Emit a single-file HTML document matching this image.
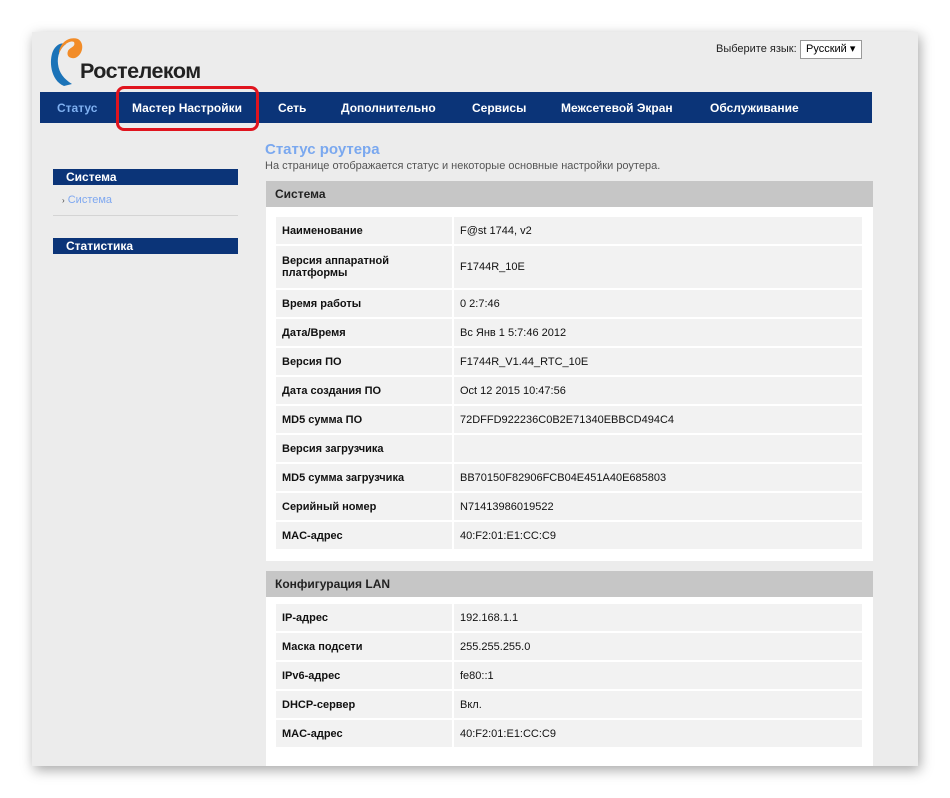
<!DOCTYPE html>
<html><head><meta charset="utf-8"><style>
body{margin:0;width:950px;height:798px;background:#fff;font-family:"Liberation Sans",sans-serif;position:relative;overflow:hidden}
.page{position:absolute;left:32px;top:32px;width:886px;height:734px;background:#ececec;box-shadow:2px 4px 12px rgba(0,0,0,.35)}
.a{position:absolute}
.nav{left:40px;top:92px;width:832px;height:31px;background:#0b3478}
.nav span{position:absolute;top:9px;color:#fff;font-weight:bold;font-size:12px}
.side{background:#0b3478;color:#fff;font-weight:bold;font-size:12px;padding-left:13px;height:16px;line-height:16px;width:172px;left:53px}
.panel{background:#fff;left:266px;width:607px}
.hdr{background:#c6c6c6;left:266px;width:607px;height:26px;line-height:26px;font-weight:bold;font-size:12px;padding-left:9px;box-sizing:border-box;color:#222}
table{position:absolute;left:274px;width:590px;border-collapse:collapse;font-size:11px;color:#111}
td{background:#f2f2f2;border:2px solid #fff;padding:0 6px;height:27px}
td:first-child{font-weight:bold;width:164px}
</style></head><body>
<div class="page"></div>
<svg class="a" style="left:48px;top:36px" width="40" height="52" viewBox="0 0 40 52">
<path d="M16 50 C2 44 1 24 5 15 C8 9 13 6 18 8 C12 12 9 20 10 28 C11 37 16 43 24 48 Z" fill="#1b73b8"/>
<path d="M11 18 C11 7 21 0 30 3 C37 7 35 19 27 22 C22 23 18 20 20 15 C22 11 28 11 26 6 C22 4 14 9 11 18 Z" fill="#f28c28"/>
</svg>
<div class="a" style="left:80px;top:59px;font-size:21.5px;font-weight:bold;color:#222;letter-spacing:-0.5px">Ростелеком</div>
<div class="a" style="left:716px;top:43px;font-size:11px;color:#222">Выберите язык:</div>
<div class="a" style="left:800px;top:40px;height:17px;border:1px solid #999;background:#fff;font-size:11px;line-height:17px;padding-left:5px;width:55px">Русский ▾</div>
<div class="a nav">
<span style="left:17px;color:#7fb0f0">Статус</span>
<span style="left:92px">Мастер Настройки</span>
<span style="left:238px">Сеть</span>
<span style="left:301px">Дополнительно</span>
<span style="left:432px">Сервисы</span>
<span style="left:521px">Межсетевой Экран</span>
<span style="left:670px">Обслуживание</span>
</div>
<div class="a" style="left:116px;top:86px;width:137px;height:39px;border:3px solid #e0141e;border-radius:8px"></div>
<div class="a side" style="top:169px">Система</div>
<div class="a" style="left:62px;top:194px;font-size:11px;color:#7fa8f0"><span style="color:#444;font-size:8px">›</span> Система</div>
<div class="a" style="left:53px;top:215px;width:185px;height:1px;background:#d4d4d4"></div>
<div class="a side" style="top:238px">Статистика</div>
<div class="a" style="left:265px;top:141px;font-size:15px;font-weight:bold;color:#7aa8ef">Статус роутера</div>
<div class="a" style="left:265px;top:160px;font-size:11px;color:#555">На странице отображается статус и некоторые основные настройки роутера.</div>
<div class="a hdr" style="top:181px">Система</div>
<div class="a panel" style="top:207px;height:354px"></div>
<table style="top:215px">
<tr><td>Наименование</td><td>F@st 1744, v2</td></tr>
<tr><td style="height:42px">Версия аппаратной платформы</td><td>F1744R_10E</td></tr>
<tr><td>Время работы</td><td>0 2:7:46</td></tr>
<tr><td>Дата/Время</td><td>Вс Янв 1 5:7:46 2012</td></tr>
<tr><td>Версия ПО</td><td>F1744R_V1.44_RTC_10E</td></tr>
<tr><td>Дата создания ПО</td><td>Oct 12 2015 10:47:56</td></tr>
<tr><td>MD5 сумма ПО</td><td>72DFFD922236C0B2E71340EBBCD494C4</td></tr>
<tr><td>Версия загрузчика</td><td></td></tr>
<tr><td>MD5 сумма загрузчика</td><td>BB70150F82906FCB04E451A40E685803</td></tr>
<tr><td>Серийный номер</td><td>N71413986019522</td></tr>
<tr><td>MAC-адрес</td><td>40:F2:01:E1:CC:C9</td></tr>
</table>
<div class="a hdr" style="top:571px">Конфигурация LAN</div>
<div class="a panel" style="top:597px;height:169px"></div>
<table style="top:602px">
<tr><td>IP-адрес</td><td>192.168.1.1</td></tr>
<tr><td>Маска подсети</td><td>255.255.255.0</td></tr>
<tr><td>IPv6-адрес</td><td>fe80::1</td></tr>
<tr><td>DHCP-сервер</td><td>Вкл.</td></tr>
<tr><td>MAC-адрес</td><td>40:F2:01:E1:CC:C9</td></tr>
</table>
</body></html>
